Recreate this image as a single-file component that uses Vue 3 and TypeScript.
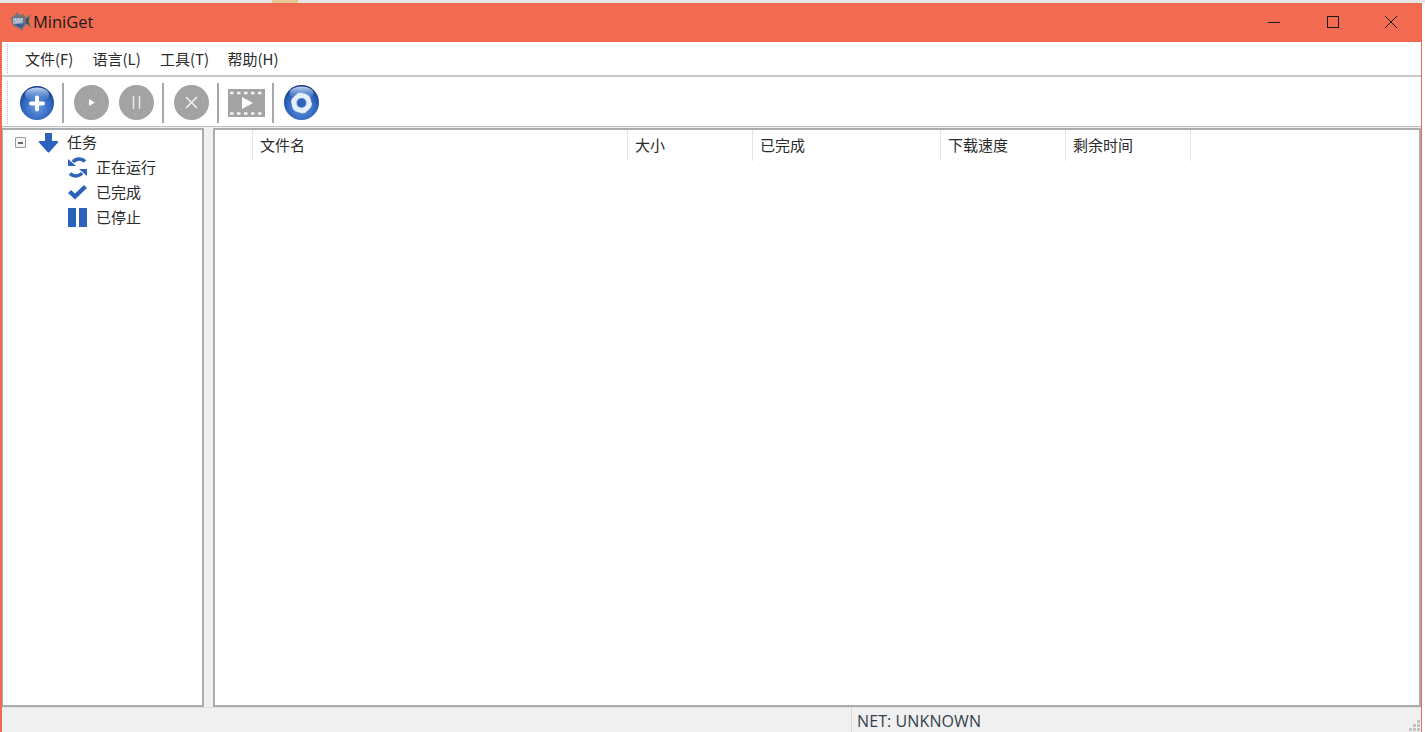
<script setup lang="ts">
const menus: string[] = ['文件(F)', '语言(L)', '工具(T)', '帮助(H)']
const columns: { label: string; width: number }[] = [
  { label: '', width: 38 },
  { label: '文件名', width: 375 },
  { label: '大小', width: 125 },
  { label: '已完成', width: 188 },
  { label: '下载速度', width: 125 },
  { label: '剩余时间', width: 125 },
]
</script>

<template>
  <div class="screen">
    <div class="desktop-strip">
      <span class="tan"></span>
    </div>
    <div class="window">
      <header class="titlebar">
        <svg class="logo" width="20" height="19" viewBox="0 0 20 19">
          <path d="M0 6 L4 3 L6 0 L8 3 L12 2 L15 6 L20 2 L18 9 L20 16 L15 12 L12 16 L11 19 L8 16 L4 15 L1 12 Z" fill="#6f747b" />
          <path d="M2 6h10v6H2z" fill="#a7b2c6" />
          <path d="M4 12 L14 11 L11 16 L7 15 Z" fill="#3c5f9c" />
          <path d="M15 7 L18 5 L17 9 L18 13 L15 11 Z" fill="#43484e" />
          <path d="M4 7h1v1H4zM7 7h1v1H7zM10 7h1v1h-1zM5 9h1v1H5zM8 9h1v1H8z" fill="#e8ecf2" />
        </svg>
        <span class="app-name">MiniGet</span>
        <div class="win-buttons">
          <svg width="12" height="12" viewBox="0 0 12 12"><path d="M0 6.500h12" stroke="#1a1a1a" fill="none" /></svg>
          <svg width="12" height="12" viewBox="0 0 12 12"><rect x=".5" y=".5" width="11" height="11" stroke="#1a1a1a" fill="none" /></svg>
          <svg width="12" height="12" viewBox="0 0 12 12"><path d="M0 0 12 12M12 0 0 12" stroke="#1a1a1a" fill="none" /></svg>
        </div>
      </header>

      <nav class="menubar">
        <i class="gripper"></i>
        <span v-for="m in menus" :key="m" class="menu-item">{{ m }}</span>
      </nav>

      <div class="toolbar">
        <i class="gripper"></i>
        <svg class="tool add" width="34" height="34" viewBox="0 0 34 34">
          <defs>
            <radialGradient id="blue" cx="50%" cy="62%" r="58%">
              <stop offset="0" stop-color="#6a9ce4" />
              <stop offset=".75" stop-color="#2c62bb" />
              <stop offset="1" stop-color="#173f8c" />
            </radialGradient>
            <linearGradient id="gloss" x1="0" y1="0" x2="0" y2="1">
              <stop offset="0" stop-color="#cfe1f8" stop-opacity=".95" />
              <stop offset="1" stop-color="#7fa9e6" stop-opacity="0" />
            </linearGradient>
          </defs>
          <circle cx="17" cy="17" r="17" fill="url(#blue)" />
          <ellipse cx="17" cy="8.500" rx="12" ry="7" fill="url(#gloss)" />
          <path d="M17 11.500v12M11 17.500h12" stroke="#fff" stroke-width="4" stroke-linecap="round" />
        </svg>
        <i class="sep sep-a"></i>
        <svg class="tool" width="35" height="35" viewBox="0 0 35 35">
          <circle cx="17.500" cy="17.500" r="17.500" fill="#a1a3a5" />
          <circle cx="17.500" cy="17.500" r="11" fill="none" stroke="#e8c27c" stroke-dasharray="1 7" />
          <path d="M15 14l6 3.500-6 3.500z" fill="#fff" />
        </svg>
        <svg class="tool pause" width="35" height="35" viewBox="0 0 35 35">
          <circle cx="17.500" cy="17.500" r="17.500" fill="#a1a3a5" />
          <circle cx="17.500" cy="17.500" r="12" fill="none" stroke="#e8c27c" stroke-dasharray="1 9" />
          <path d="M14.500 11v13M20.500 11v13" stroke="#e8e8e8" stroke-width="1.500" />
        </svg>
        <i class="sep sep-b"></i>
        <svg class="tool" width="35" height="35" viewBox="0 0 35 35">
          <circle cx="17.500" cy="17.500" r="17.500" fill="#a1a3a5" />
          <circle cx="17.500" cy="17.500" r="12" fill="none" stroke="#e8c27c" stroke-dasharray="1 9" />
          <path d="M12 12l11 11M23 12l-11 11" stroke="#f2f2f2" stroke-width="1.500" />
        </svg>
        <i class="sep sep-c"></i>
        <svg class="tool" width="37" height="28" viewBox="0 0 37 28">
          <rect width="37" height="28" fill="#a1a3a5" />
          <path d="M2 4h33M2 24.500h33" stroke="#f4f4f4" stroke-width="2.500" stroke-dasharray="3.500 3.500" />
          <path d="M14 8l11 6-11 6z" fill="#fff" />
        </svg>
        <i class="sep sep-d"></i>
        <svg class="tool" width="35" height="35" viewBox="0 0 35 35">
          <circle cx="17.500" cy="17.500" r="17.500" fill="url(#blue)" />
          <ellipse cx="17.500" cy="8" rx="12" ry="6.500" fill="url(#gloss)" />
          <circle cx="17.500" cy="18" r="7.500" fill="none" stroke="#e6eefa" stroke-width="5" />
          <circle cx="17.500" cy="18" r="10" fill="none" stroke="#e6eefa" stroke-width="1" stroke-dasharray="5 5.500" />
          <circle cx="17.500" cy="18" r="4" fill="#2f62b6" />
        </svg>
      </div>

      <main class="panes">
        <aside class="tree pane">
          <div class="tree-row root">
            <span class="expander"><b></b></span>
            <svg class="tree-arrow" width="21" height="20" viewBox="0 0 21 20">
              <path d="M7 0h7v8h5q2 0 1 1.500L11.500 19q-1 1.200-2 0L1 9.500Q0 8 2 8h5z" fill="#2c62bb" />
            </svg>
            <span class="label">任务</span>
          </div>
          <div class="tree-row child">
            <svg width="21" height="21" viewBox="0 0 21 21">
              <path d="M18 4.500A8 8 0 0 0 6 5M3 16.500A8 8 0 0 0 15 16" fill="none" stroke="#2c62bb" stroke-width="3.500" />
              <path d="M1 2v7h8zM20 19v-7h-8z" fill="#2c62bb" />
            </svg>
            <span class="label">正在运行</span>
          </div>
          <div class="tree-row child">
            <svg width="21" height="21" viewBox="0 0 21 21">
              <path d="M1 11l3-3 4 3.500 9-8.500 3 3-12 11.500z" fill="#2c62bb" />
            </svg>
            <span class="label">已完成</span>
          </div>
          <div class="tree-row child">
            <svg width="21" height="21" viewBox="0 0 21 21">
              <path d="M1 1h8v19H1zM12 1h8v19h-8z" fill="#2c62bb" />
            </svg>
            <span class="label">已停止</span>
          </div>
        </aside>
        <section class="list pane">
          <div class="list-head">
            <div
              v-for="(c, i) in columns"
              :key="i"
              class="col"
              :style="{ width: c.width + 'px' }"
            >{{ c.label }}</div>
          </div>
        </section>
      </main>

      <footer class="statusbar">
        <div class="status-main"></div>
        <div class="status-net">NET: UNKNOWN</div>
        <svg class="grip" width="14" height="14" viewBox="0 0 14 14">
          <path d="M10 2h3v3h-3zM6 6h3v3H6zM10 6h3v3h-3zM2 10h3v3H2zM6 10h3v3H6zM10 10h3v3h-3z" fill="#c4c4c4" />
        </svg>
      </footer>
    </div>
  </div>
</template>

<style>
html, body { margin: 0; background: #fff; overflow: hidden; }
</style>

<style scoped>
.screen {
  width: 1425px;
  height: 732px;
  display: flex;
  flex-direction: column;
  font-family: "Noto Sans CJK SC", "Noto Sans", sans-serif;
  font-size: 15px;
  color: #2a2a2a;
  background: #fff;
}
.desktop-strip {
  height: 3px;
  background: #e6e6e6;
  padding-left: 272px;
}
.tan {
  display: block;
  width: 26px;
  height: 3px;
  background: #e9c793;
}
.window {
  flex: 1;
  display: flex;
  flex-direction: column;
  min-height: 0;
  margin-right: 3px;
  border-left: 2px solid #f26a50;
  border-right: 1px solid #f26a50;
  background: #f0f0f0;
}
.titlebar {
  height: 39px;
  margin: 0 -1px 0 -2px;
  padding: 0 25px 2px 11px;
  box-sizing: border-box;
  background: #f26a50;
  display: flex;
  align-items: center;
  color: #1a1a1a;
  font-family: "Open Sans", sans-serif;
  font-size: 16.5px;
}
.logo { margin-right: 2px; }
.win-buttons {
  margin-left: auto;
  display: flex;
  gap: 46.500px;
}
.gripper {
  width: 0;
  align-self: stretch;
  border-left: 1px dotted #b8b8b8;
  margin: 2px 17px 2px 5px;
  flex: none;
}
.menubar {
  height: 35px;
  background: #fff;
  display: flex;
  align-items: center;
  border-bottom: 2px solid #c8c8c8;
  box-sizing: border-box;
}
.menu-item {
  width: 55px;
  margin-right: 12.500px;
  white-space: nowrap;
}
.toolbar {
  height: 50px;
  box-sizing: border-box;
  background: #fff;
  display: flex;
  align-items: center;
  padding-top: 2px;
  border-bottom: 1px solid #bdbdbd;
}
.toolbar .gripper { margin-right: 12px; }
.tool { flex: none; }
.sep {
  width: 2px;
  height: 40px;
  background: #a6a9ab;
  flex: none;
}
.sep-a { margin: 0 10px 0 8px; }
.sep-b { margin: 0 10px 0 8px; }
.sep-c { margin: 0 9px 0 8px; }
.sep-d { margin: 0 10px 0 7px; }
.pause { margin-left: 10px; }
.panes {
  flex: 1;
  min-height: 0;
  display: flex;
  gap: 9px;
  padding-top: 1px;
  background: #f0f0f0;
}
.pane {
  background: #fff;
  box-sizing: border-box;
  border: 2px solid #a9adb0;
}
.tree {
  width: 202px;
  border-left-width: 1px;
}
.list {
  flex: 1;
}
.tree-row {
  height: 25px;
  display: flex;
  align-items: center;
  white-space: nowrap;
}
.label { padding-bottom: 2px; }
.root { padding-left: 12px; }
.child { padding-left: 64px; gap: 8px; }
.expander {
  width: 9px;
  height: 9px;
  border: 1px solid #9a9a9a;
  border-radius: 1px;
  background: #f4f4f4;
  display: flex;
  align-items: center;
  justify-content: center;
  margin-right: 12px;
}
.expander b {
  width: 5px;
  height: 2px;
  background: #666;
}
.tree-arrow { margin-right: 8px; }
.list-head {
  display: flex;
  height: 31px;
}
.col {
  box-sizing: border-box;
  padding-left: 7px;
  line-height: 29px;
  border-right: 1px solid #e4e4e4;
  flex: none;
}
.col:first-child { padding-left: 0; }
.statusbar {
  height: 25px;
  display: flex;
  align-items: stretch;
  position: relative;
  border-top: 1px dotted #cfcfcf;
  box-sizing: border-box;
}
.status-main {
  width: 849px;
  border-right: 1px solid #d8d8d8;
}
.status-net {
  padding-left: 5px;
  line-height: 26px;
  font-family: "Open Sans", sans-serif;
  font-size: 16px;
  letter-spacing: 0.1px;
  color: #33404c;
}
.grip {
  position: absolute;
  right: 0;
  bottom: 0;
}
</style>
